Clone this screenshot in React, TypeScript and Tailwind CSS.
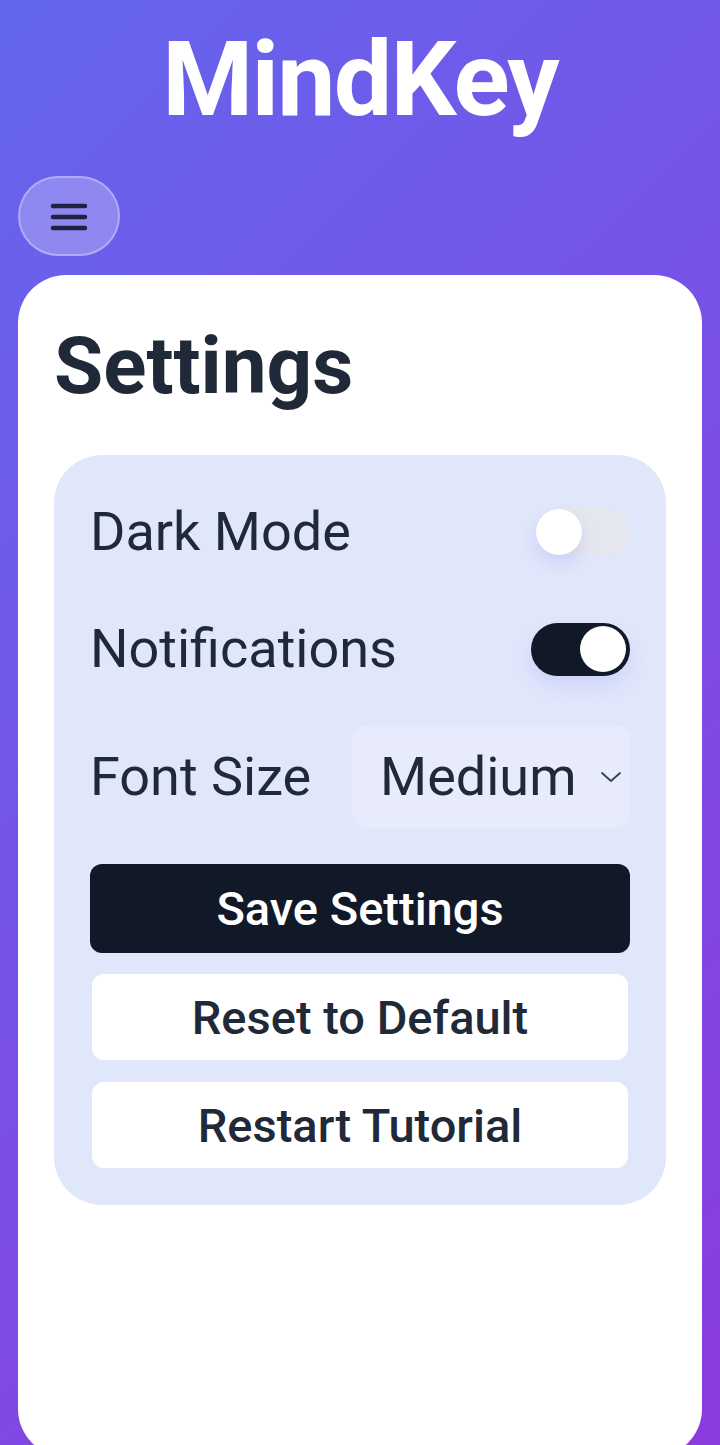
import {useState} from "react";

/*
|--------------------------------------------------------------------------
| $toggle
|--------------------------------------------------------------------------
*/
function Toggle({on, onChange}: { on: boolean; onChange: () => void }) {
    if (on) {
        return (
            <button onClick={onChange}
                    className="relative flex h-[53px] w-[99px] items-center justify-end rounded-full bg-[#111827] pr-[4px] shadow-[0_10px_18px_rgba(79,70,229,0.12)]">
                <span className="block h-[46px] w-[46px] rounded-full bg-white"/>
            </button>
        );
    }

    return (
        <button onClick={onChange}
                className="relative flex h-[48px] w-[94px] items-center rounded-full bg-[#e5e7ee]">
            <span className="block h-[46px] w-[46px] rounded-full bg-white shadow-[0_8px_16px_rgba(79,70,229,0.14)]"/>
        </button>
    );
}

export default function App() {

    const [dark, setDark] = useState(false);
    const [notify, setNotify] = useState(true);
    const [size, setSize] = useState("Medium");

    return (
        <div
            className="h-[1445px] w-full overflow-hidden bg-[linear-gradient(135deg,#6366ee,#7b4ee4_55%,#8b3bde)] font-['Roboto',sans-serif]">

            {/* HEADER */}
            <h1 className="pt-[28px] text-center text-[104px] font-bold leading-none text-white tracking-[-1.8px]">
                MindKey
            </h1>

            <div className="px-[18px] pt-[44px]">
                <button
                    className="flex h-[80px] w-[102px] items-center justify-center rounded-full border-2 border-white/30 bg-white/25">
                    <svg width="38" height="30" viewBox="0 0 38 30" fill="none">
                        <path d="M3 5h32M3 16h32M3 27h32" stroke="#1e2340" strokeWidth="4.5"
                              strokeLinecap="round"/>
                    </svg>
                </button>
            </div>

            {/* CARD */}
            <div className="mx-[18px] mt-[19px] h-[1182px] rounded-[48px] bg-white px-9 pt-[51px]">
                <h2 className="text-[80px] font-bold leading-none text-[#1f2937]">
                    Settings
                </h2>

                <div className="mt-[49px] flex flex-col rounded-[48px] bg-[#e0e7fb] px-9 pb-[37px] pt-[36px]">

                    <div className="flex h-[82px] items-center justify-between">
                        <span className="text-[54px] leading-none text-[#1f2937]">Dark Mode</span>
                        <Toggle on={dark} onChange={() => setDark(!dark)}/>
                    </div>

                    <div className="mt-9 flex h-[80px] items-center justify-between">
                        <span className="text-[54px] leading-none text-[#1f2937]">Notifications</span>
                        <Toggle on={notify} onChange={() => setNotify(!notify)}/>
                    </div>

                    <div className="mt-9 flex h-[103px] items-center justify-between">
                        <span className="text-[54px] leading-none text-[#1f2937]">Font Size</span>
                        <button onClick={() => setSize(size)}
                                className="flex h-full w-[278px] items-center justify-between rounded-[14px] bg-[#e7ebfb] pl-[28px] pr-[8px]">
                            <span className="text-[54px] leading-none text-[#1f2937]">{size}</span>
                            <svg width="22" height="12" viewBox="0 0 22 12" fill="none">
                                <path d="M2 2l9 8 9-8" stroke="#374151" strokeWidth="1.8"
                                      strokeLinecap="round" strokeLinejoin="round"/>
                            </svg>
                        </button>
                    </div>

                    <button
                        className="mt-9 h-[89px] w-full rounded-[12px] bg-[#111827] text-[47px] font-medium leading-none text-white">
                        Save Settings
                    </button>

                    <button
                        className="mx-[2px] mt-[21px] h-[86px] rounded-[12px] bg-white text-[47px] font-medium leading-none text-[#1f2937]">
                        Reset to Default
                    </button>

                    <button
                        className="mx-[2px] mt-[22px] h-[86px] rounded-[12px] bg-white text-[47px] font-medium leading-none text-[#1f2937]">
                        Restart Tutorial
                    </button>
                </div>
            </div>
        </div>
    );
}
